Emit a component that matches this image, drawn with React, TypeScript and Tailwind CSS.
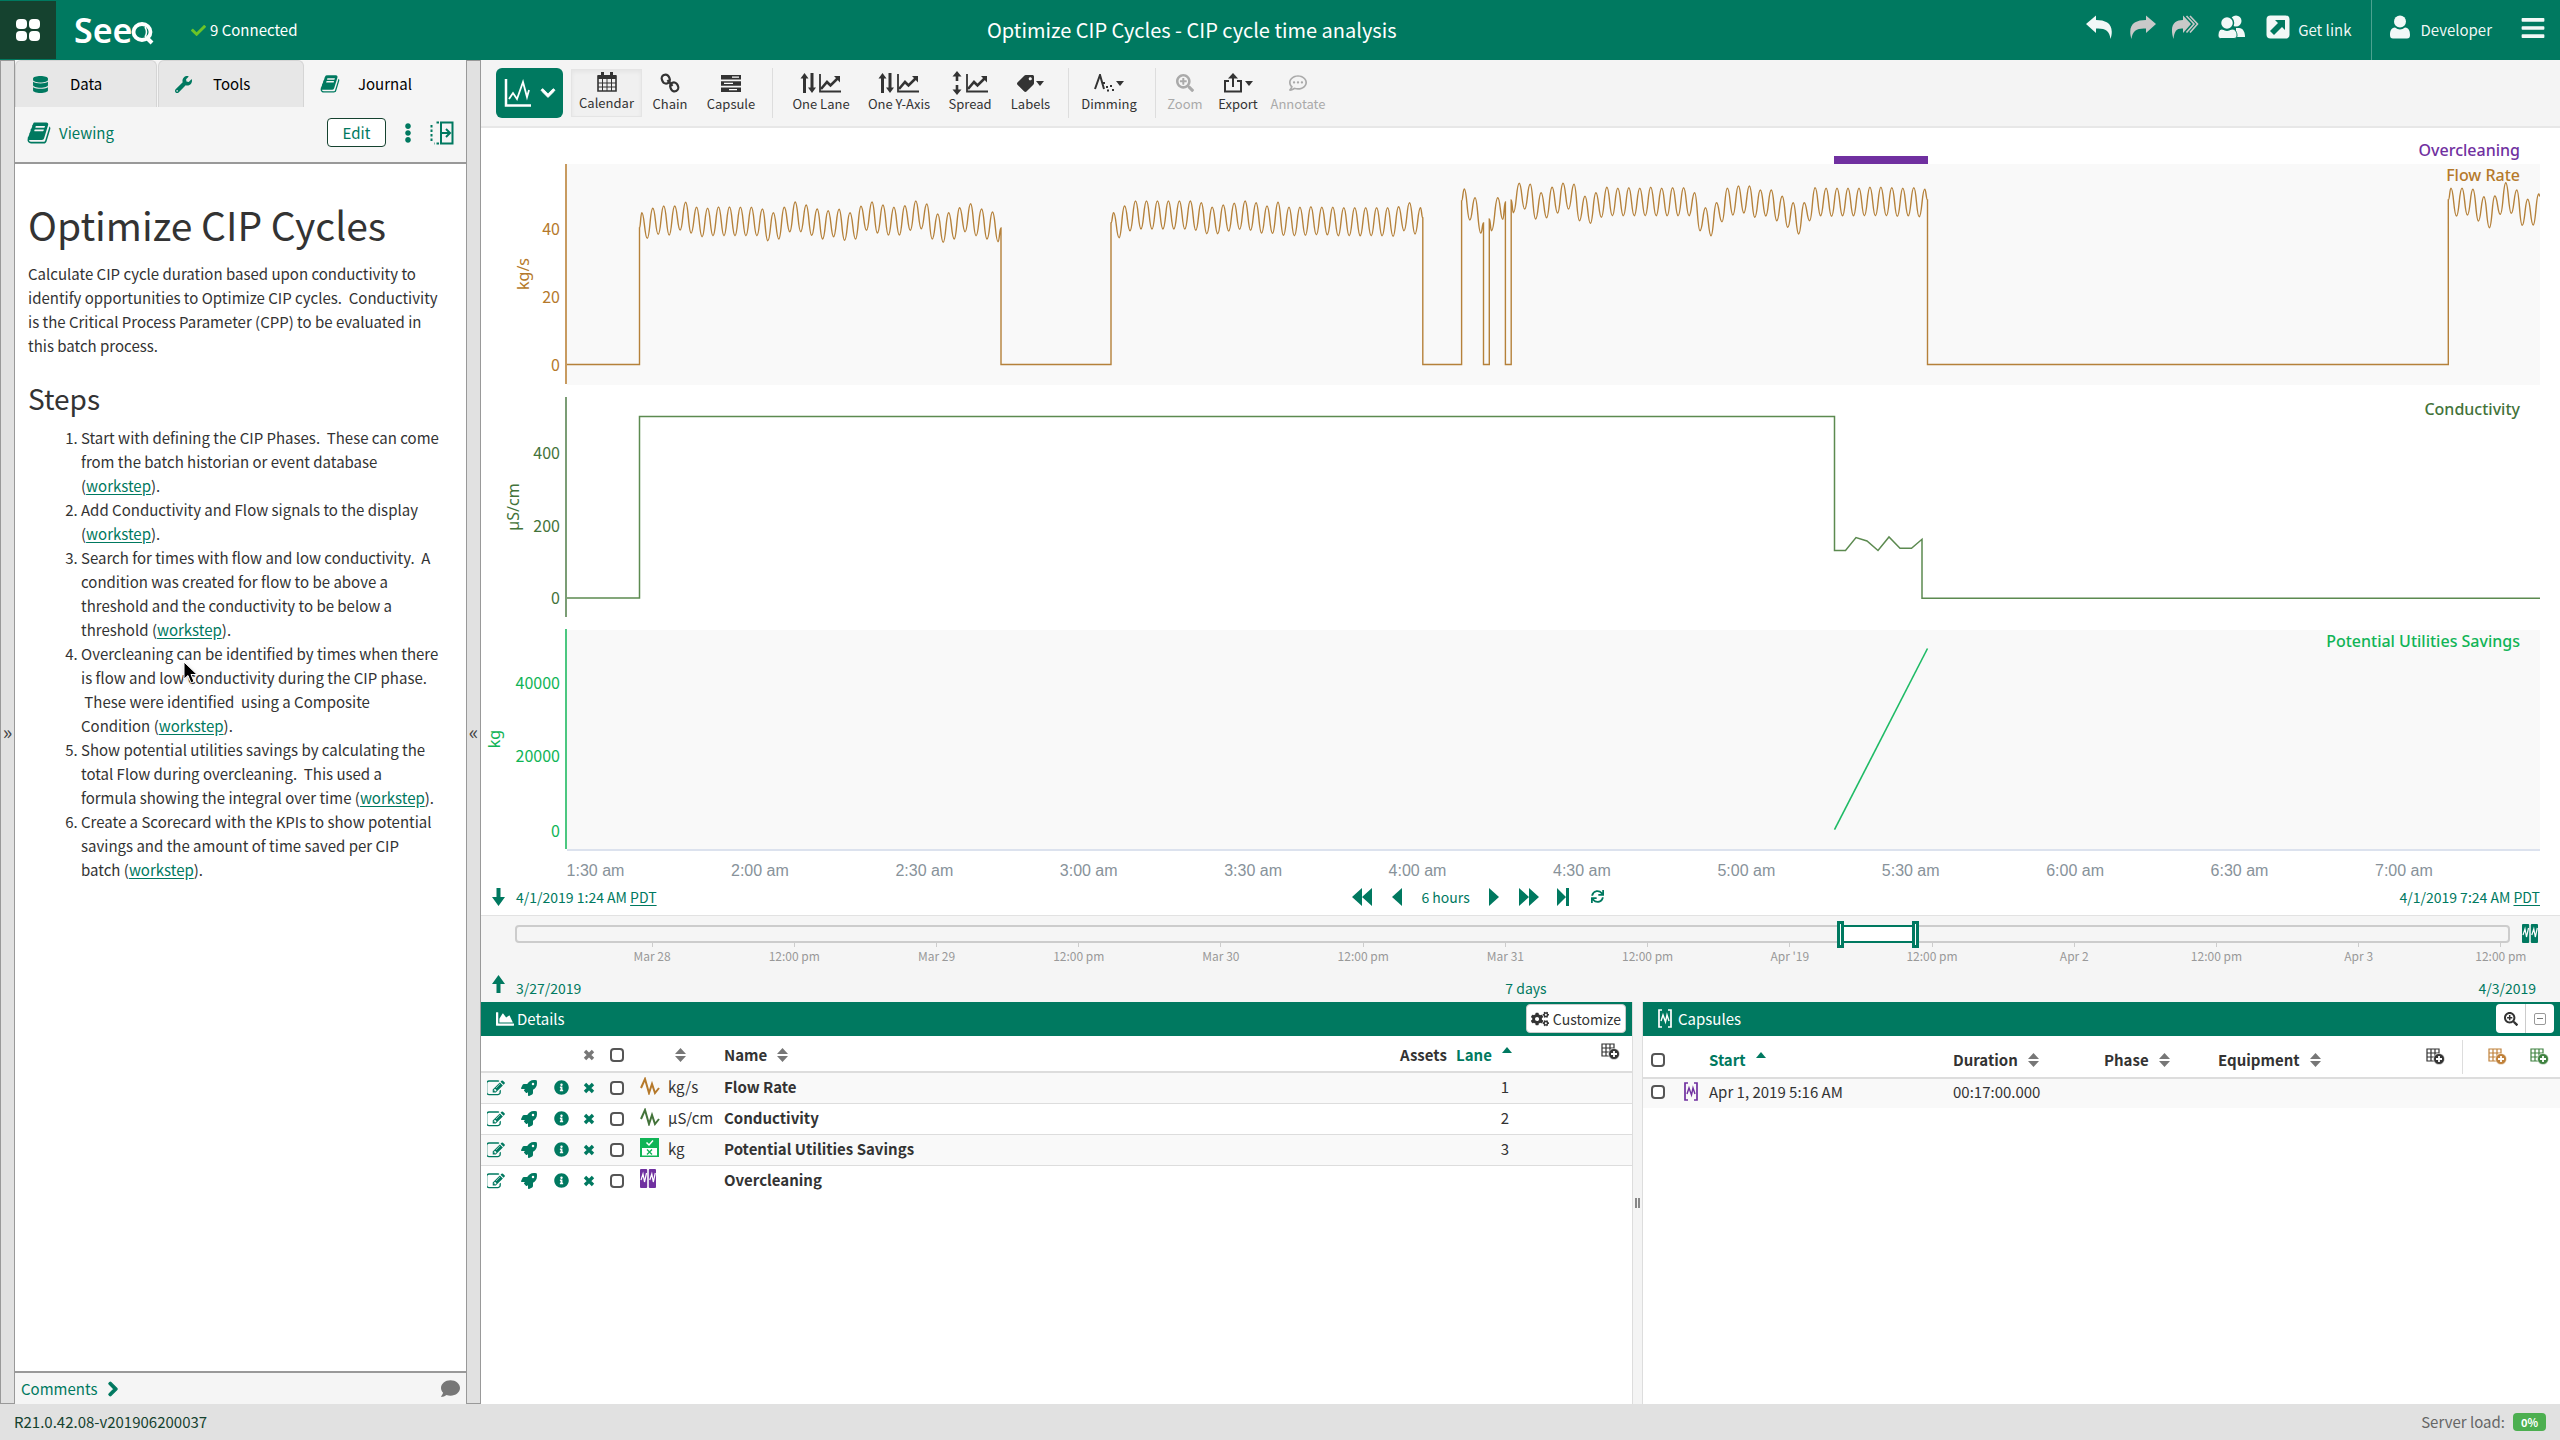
import type { ReactNode } from "react";
import {
  FaBars,
  FaChartArea,
  FaCheck,
  FaChevronDown,
  FaChevronRight,
  FaCogs,
  FaComment,
  FaDatabase,
  FaEllipsisV,
  FaInfoCircle,
  FaRegCommentDots,
  FaRocket,
  FaSearchPlus,
  FaSync,
  FaTag,
  FaTimes,
  FaUser,
  FaWrench,
} from "react-icons/fa";

/* ---------- flow rate series ---------- */

type Pt = [number, number];
const STEP = 10.96;
const ZERO = 364.5;

/** Interleaves crests and troughs spaced one period apart. */
function wave(x0: number, crests: number[], troughs: number[]): Pt[] {
  const out: Pt[] = [];
  crests.forEach((c, i) => {
    out.push([x0 + i * STEP, c]);
    if (i < troughs.length) out.push([x0 + (i + 0.5) * STEP, troughs[i]]);
  });
  return out;
}

const third = (base: number, v: number[]) => v.map((n) => n / 3 + base);

const runs: Pt[][] = [
  [
    [639.5, 228],
    ...wave(
      641.8,
      third(50, [488, 475, 468, 468, 457, 472, 475, 471, 471, 472, 472, 477, 488, 472, 456, 465, 477, 482, 478, 488, 469, 456, 465, 472, 467, 453, 462, 492, 488, 473, 461, 477, 486]),
      third(50, [565, 553, 555, 540, 549, 560, 557, 557, 557, 557, 557, 572, 567, 545, 545, 556, 567, 560, 571, 567, 541, 549, 555, 555, 541, 536, 567, 577, 567, 545, 557, 567, 575]),
    ),
    [1001, 228],
  ],
  [
    [1111, 223],
    ...wave(
      1113.6,
      [...third(50, [488, 468, 453, 453, 453, 453, 453, 453, 458, 472, 465, 460, 453, 458, 468, 457, 472, 472]), ...third(130, [230, 232, 232, 233, 233, 233, 233, 233, 230, 218, 233])],
      [...third(50, [563, 542, 537, 537, 537, 537, 537, 541, 551, 551, 543, 538, 541, 549, 550, 556, 557, 556]), ...third(130, [314, 314, 317, 317, 317, 317, 317, 319, 302, 312])],
    ),
    [1422.8, 218],
  ],
  [
    [1461.6, 201],
    [1464.3, 189],
    [1469.8, 220],
    [1475, 197.7],
    [1480.8, 233],
    [1483.5, 223],
  ],
  [
    [1489.3, 219],
    [1491.5, 230.7],
    [1497.8, 197.7],
    [1502.7, 219.3],
    [1505.4, 202],
  ],
  [
    [1511.2, 200],
    [1513.4, 212.7],
    ...wave(
      1519.2,
      third(130, [160, 163, 188, 172, 160, 163, 199, 188, 172, 175, 173, 175, 172, 175, 173, 173, 188, 233, 218, 175, 168, 168, 180, 180, 199, 218, 218, 173, 175, 175, 175, 175, 172, 172, 173, 175, 173, 178]),
      third(130, [237, 267, 263, 249, 237, 272, 280, 262, 257, 257, 257, 257, 257, 257, 257, 257, 302, 317, 275, 255, 249, 262, 258, 272, 292, 312, 272, 257, 259, 257, 257, 257, 257, 257, 259, 257, 260]),
    ),
    [1927.5, 200],
  ],
  [
    [2448.3, 200],
    ...wave(2451, third(0, [565, 565, 568, 590, 588, 548, 570, 598, 582]), third(0, [648, 645, 663, 683, 643, 640, 676, 675])),
    [2540, 196],
  ],
];

function flowPath(): string {
  let d = `M567 ${ZERO}`;
  runs.forEach((run, r) => {
    d += `H${run[0][0].toFixed(1)}V${run[0][1]}`;
    for (let i = 1; i < run.length; i++) {
      const [px, py] = run[i - 1];
      const [x, y] = run[i];
      const m = ((px + x) / 2).toFixed(1);
      d += `C${m} ${py.toFixed(1)} ${m} ${y.toFixed(1)} ${x.toFixed(1)} ${y.toFixed(1)}`;
    }
    if (r < runs.length - 1) d += `V${ZERO}`;
  });
  return d;
}

const hours = ["1:30 am", "2:00 am", "2:30 am", "3:00 am", "3:30 am", "4:00 am", "4:30 am", "5:00 am", "5:30 am", "6:00 am", "6:30 am", "7:00 am"];

function Tick({ y, children }: { y: number; children: ReactNode }) {
  return (
    <text x="560" y={y} textAnchor="end">
      {children}
    </text>
  );
}

function TrendChart() {
  return (
    <svg viewBox="481 128 2079 756" className="block w-full shrink-0 text-base" role="img" aria-label="Trend of flow rate, conductivity and potential utilities savings">
      <rect x="567" y="164" width="1973" height="221" fill="#f9f9f9" />
      <rect x="567" y="630" width="1973" height="219" fill="#f9f9f9" />
      <rect x="567" y="849" width="1973" height="2" fill="#dce2ee" />
      <rect x="1834" y="156" width="94" height="8" fill="#7030a0" />

      <g fill="#b5792b">
        <rect x="565" y="164" width="2" height="220" opacity="0.75" />
        <Tick y={235}>40</Tick>
        <Tick y={303}>20</Tick>
        <Tick y={371}>0</Tick>
        <text transform="translate(529 274) rotate(-90)" textAnchor="middle" className="font-['Noto_Sans']">kg/s</text>
      </g>
      <g fill="#43733a">
        <rect x="565" y="397" width="2" height="220" opacity="0.7" />
        <Tick y={459}>400</Tick>
        <Tick y={532}>200</Tick>
        <Tick y={604}>0</Tick>
        <text transform="translate(519 507) rotate(-90)" textAnchor="middle" className="font-['Noto_Sans']">µS/cm</text>
      </g>
      <g fill="#10b456">
        <rect x="565" y="629" width="2" height="220" opacity="0.75" />
        <Tick y={689}>40000</Tick>
        <Tick y={762}>20000</Tick>
        <Tick y={837}>0</Tick>
        <text transform="translate(500 739) rotate(-90)" textAnchor="middle" className="font-['Noto_Sans']">kg</text>
      </g>

      <path d={flowPath()} fill="none" stroke="#b5813a" strokeWidth="1.4" />
      <path
        d="M567 598H639.5V416.5H1834.5V550.5H1845.5L1856 537.5L1867 541L1878 550.5L1889 537L1900 548.3H1911.5L1922 539.3V598.3H2540"
        fill="none"
        stroke="#5c8a50"
        strokeWidth="1.5"
      />
      <path d="M1834.5 829.7L1927.5 648.5" fill="none" stroke="#1fbb66" strokeWidth="1.6" />

      <g className="font-['Noto_Sans'] font-medium" textAnchor="end">
        <text x="2520" y="156" fill="#7030a0">Overcleaning</text>
        <text x="2520" y="181" fill="#b5792b">Flow Rate</text>
        <text x="2520" y="415" fill="#43733a">Conductivity</text>
        <text x="2520" y="647" fill="#10b456">Potential Utilities Savings</text>
      </g>
      <g className="font-['Liberation_Sans']" textAnchor="middle" fill="#87929a">
        {hours.map((h, i) => (
          <text key={h} x={595.5 + i * 164.4} y="876">
            {h}
          </text>
        ))}
      </g>
    </svg>
  );
}

/* ---------- icons ---------- */

const BOOK =
  "M1639 478q40 57 18 129l-275 906q-19 64-76.5 107.5t-122.5 43.5h-923q-77 0-148.5-53.5t-99.5-131.5q-24-67-2-127 0-4 3-27t4-37q1-8-3-21.5t-3-19.5q2-11 8-21t16.5-23.5 16.5-23.5q23-38 45-91.5t30-91.5q3-10 .5-30t-.5-28q3-11 17-28t17-23q21-36 42-92t25-90q1-9-2.5-32t.5-28q4-13 22-30.5t22-22.5q19-26 42.5-84.5t27.5-96.5q1-8-3-25.5t-2-26.5q2-8 9-18t18-23 17-21q8-12 16.5-30.5t15-35 16-36 19.5-32 26.5-23.5 36-11.5 47.5 5.5l-1 3q38-9 51-9h761q74 0 114 56t18 130l-274 906q-36 119-71.5 153.5t-128.5 34.5h-869q-27 0-38 15-11 16-1 43 24 70 144 70h923q29 0 56-15.5t35-41.5l300-987q7-22 5-57 38 15 59 43zm-1064 2q-4 13 2 22.5t20 9.5h608q13 0 25.5-9.5t16.5-22.5l21-64q4-13-2-22.5t-20-9.5h-608q-13 0-25.5 9.5t-16.5 22.5zm-83 256q-4 13 2 22.5t20 9.5h608q13 0 25.5-9.5t16.5-22.5l21-64q4-13-2-22.5t-20-9.5h-608q-13 0-25.5 9.5t-16.5 22.5z";
const EDIT =
  "M888 1184l116-116-152-152-116 116v56h96v96h56zm440-720q-16-16-33 1l-350 350q-17 17-1 33t33-1l350-350q17-17 1-33zm80 594v190q0 119-84.5 203.5t-203.5 84.5h-832q-119 0-203.5-84.5t-84.5-203.5v-832q0-119 84.5-203.5t203.5-84.5h832q63 0 117 25 15 7 18 23 3 17-9 29l-49 49q-14 14-32 8-23-6-45-6h-832q-66 0-113 47t-47 113v832q0 66 47 113t113 47h832q66 0 113-47t47-113v-126q0-13 9-22l64-64q15-15 35-7t20 29zm-96-738l288 288-672 672h-288v-288zm444 132l-92 92-288-288 92-92q28-28 68-28t68 28l152 152q28 28 28 68t-28 68z";

function Icon({ box, className, children }: { box: string; className: string; children: ReactNode }) {
  return (
    <svg viewBox={box} className={`${className} shrink-0`} fill="currentColor" aria-hidden="true">
      {children}
    </svg>
  );
}

const BookIcon = ({ className }: { className: string }) => (
  <Icon box="0 100 1670 1600" className={className}>
    <path d={BOOK} />
  </Icon>
);

const UndoIcon = () => (
  <Icon box="0 0 27 24" className="h-6 w-[27px]">
    <path d="M0 9L10 0.500V5C21 5 29 9.500 24.500 24C23.500 15.500 19 13 10 13.500V18Z" />
  </Icon>
);
const RedoIcon = () => (
  <Icon box="0 0 27 24" className="h-6 w-[27px]">
    <path d="M27 9L17 0.500V5C6 5-2 9.500 2.500 24C3.500 15.500 8 13 17 13.500V18Z" />
  </Icon>
);
const RedoAllIcon = () => (
  <Icon box="0 0 28 24" className="h-6 w-7">
    <path d="M20 9L12 0.500V5C4 5-2 9.500 2.500 24C3.500 15.500 6 13 12 13.500V18Z" />
    <path d="M15.500 1L23 9L15.500 17.500M19 1L26.500 9L19 17.500" fill="none" stroke="currentColor" strokeWidth="1.600" />
  </Icon>
);
const UsersIcon = () => (
  <Icon box="0 0 27 24" className="h-6 w-[27px]">
    <circle cx="18" cy="6" r="5.500" />
    <path d="M18 13h3c4 0 6 4 6 9h-9z" />
    <circle cx="9" cy="8" r="6.500" stroke="#007960" strokeWidth="1.500" />
    <path d="M4 14q5 3 10 0c4 0 5 4 5 7q0 2.500-3 2.500H2.500Q0 23.500 0 21c0-3 1-7 4-7z" stroke="#007960" />
  </Icon>
);
const PersonIcon = () => (
  <Icon box="0 0 20 24" className="h-6 w-5">
    <circle cx="10" cy="6.500" r="6" />
    <path d="M5 12.500q5 4 10 0c4 0 5 4 5 7.500q0 3.500-3 3.500H3Q0 23.500 0 20c0-3.500 1-7.500 5-7.500z" />
  </Icon>
);
const ShareIcon = () => (
  <Icon box="0 0 24 24" className="size-6">
    <rect x="0.500" y="0.500" width="23" height="23" rx="4" />
    <path d="M9 5h10v10l-3-3-8 8-4-4 8-8z" fill="#007960" />
  </Icon>
);

const TrendIcon = () => (
  <Icon box="0 0 28 28" className="size-7">
    <path d="M2 0V26.500H27" fill="none" stroke="currentColor" strokeWidth="2.500" />
    <path d="M5 20l4-6 4 6 6-17 4 15 2-7" fill="none" stroke="currentColor" strokeWidth="1.800" />
  </Icon>
);
const CalendarIcon = () => (
  <Icon box="0 0 20 20" className="size-5">
    <path d="M1 4h18v15H1z" fill="none" stroke="currentColor" strokeWidth="1.600" />
    <path d="M1 3h18v4H1zM4 0h3v5H4zM13 0h3v5h-3z" />
    <path d="M1 11h18M1 15h18M5.500 7v12M10 7v12M14.500 7v12" stroke="currentColor" strokeWidth="1" />
  </Icon>
);
const ChainIcon = () => (
  <Icon box="0 0 20 20" className="size-5">
    <g fill="none" stroke="currentColor" strokeWidth="2.200">
      <rect x="2" y="1.500" width="7.500" height="9" rx="3.700" transform="rotate(-25 6 6)" />
      <rect x="10.500" y="9.500" width="7.500" height="9" rx="3.700" transform="rotate(-25 14 14)" />
      <path d="M7.500 7L12.500 13" />
    </g>
  </Icon>
);
const StackIcon = () => (
  <Icon box="0 0 20 17" className="h-[17px] w-5">
    <path d="M0 0h20v4.500H0zM0 6.200h20v4.500H0zM0 12.400h20v4.500H0z" />
    <path d="M11 2.200h7M3 8.400h9M8 14.600h8" stroke="#fff" strokeWidth="1.300" />
  </Icon>
);
const Graph = () => (
  <>
    <path d="M20 1V18.500H41" fill="none" stroke="currentColor" strokeWidth="1.800" />
    <path d="M21 16l6-7 3.500 3.500L38 5" fill="none" stroke="currentColor" strokeWidth="2.600" />
    <path d="M34 3h6v6.500z" />
  </>
);
const LaneIcon = () => (
  <Icon box="0 0 42 20" className="h-5 w-[42px]">
    <path d="M4.500 0L8.500 5.500H6V20H3V5.500H0.500zM12 20L16 14.500H13.500V0H10.500V14.500H8z" />
    <Graph />
  </Icon>
);
const SpreadIcon = () => (
  <Icon box="4 -2 38 24" className="h-6 w-[38px]">
    <path d="M10 -2L14.500 3.500H11.300V8H8.700V3.500H5.500zM10 22L14.500 16.500H11.300V12H8.700V16.500H5.500z" />
    <Graph />
  </Icon>
);
const Caret = () => (
  <Icon box="0 0 8 5" className="h-[5px] w-2">
    <path d="M0 0h8L4 5z" />
  </Icon>
);
const DimIcon = () => (
  <Icon box="0 0 20 18" className="h-[18px] w-5">
    <path d="M1 15L6 1l4 14" fill="none" stroke="currentColor" strokeWidth="2" />
    <path d="M9 8h2v2H9zM12 12h2v2h-2zM13 15.500h2v2h-2zM16 11h2v2h-2zM18 15h2v2h-2z" />
  </Icon>
);
const ExportIcon = () => (
  <Icon box="0 0 20 20" className="size-5">
    <path d="M6 8H2v10.500h16V8h-4M10 3v11" fill="none" stroke="currentColor" strokeWidth="2" />
    <path d="M10 0l5 5.500H5z" />
  </Icon>
);
const CrossIcon = () => (
  <Icon box="0 0 12 12" className="mx-auto size-3">
    <path d="M2 2l8 8M10 2l-8 8" fill="none" stroke="currentColor" strokeWidth="3.400" />
  </Icon>
);

const SignalIcon = () => (
  <Icon box="0 0 20 18" className="h-[18px] w-5">
    <path d="M1 11L5 2l4 14 3-9 3 9 4-5" fill="none" stroke="currentColor" strokeWidth="2" />
  </Icon>
);
const FormulaIcon = () => (
  <Icon box="0 0 19 19" className="size-[19px]">
    <rect width="19" height="19" />
    <rect x="2" y="10" width="15" height="7.500" fill="#fff" />
    <path d="M6.500 4.500l2.500 2.500 4-4.500" fill="none" stroke="#fff" strokeWidth="1.500" />
    <path d="M7 11.500l5 5M12 11.500l-5 5" stroke="currentColor" strokeWidth="1.400" />
  </Icon>
);
const ConditionIcon = () => (
  <Icon box="0 0 16 19" className="h-[19px] w-4">
    <rect width="7.200" height="19" rx="1" />
    <rect x="8.800" width="7.200" height="19" rx="1" />
    <path d="M1 11l2-6 1.500 8L6.500 4M9.800 11l2-6 1.500 8 2-9" fill="none" stroke="#fff" strokeWidth="1.200" />
  </Icon>
);
const CapsuleIcon = () => (
  <Icon box="0 0 14 19" className="h-[19px] w-3.5">
    <path d="M4 1H1V18H4M10 1H13V18H10" fill="none" stroke="currentColor" strokeWidth="1.700" />
    <path d="M3 12l2-6 2.500 7L9 6l2 6" fill="none" stroke="currentColor" strokeWidth="1.400" />
  </Icon>
);
const AddColumnIcon = () => (
  <Icon box="0 0 19 17" className="h-[17px] w-[19px]">
    <path d="M1 1h12v12H1zM1 5h12M1 9h12M5 1v12M9 1v12" fill="none" stroke="currentColor" strokeWidth="1.200" />
    <circle cx="13" cy="11" r="5.500" stroke="#fff" strokeWidth="0.600" />
    <path d="M13 8v6M10 11h6" stroke="#fff" strokeWidth="1.800" />
  </Icon>
);
const SortIcon = () => (
  <Icon box="0 0 11 14" className="h-3.5 w-[11px] text-[#777]">
    <path d="M5.500 0L11 6H0zM5.500 14L11 8H0z" />
  </Icon>
);
const SortUp = () => (
  <Icon box="0 0 10 6" className="mb-2.5 h-1.5 w-2.5">
    <path d="M5 0l5 6H0z" />
  </Icon>
);

function Play({ shape, width, label }: { shape: string; width: number; label: string }) {
  return (
    <button aria-label={label}>
      <svg viewBox={`0 0 ${width} 18`} width={width} height="18" fill="currentColor" aria-hidden="true">
        <path d={shape} />
      </svg>
    </button>
  );
}

/* ---------- header ---------- */

function TopBar() {
  return (
    <header className="flex h-[60px] shrink-0 items-center bg-[#007960] text-white">
      <button className="my-px flex h-[58px] w-14 items-center justify-center self-start bg-[#15422f]" aria-label="Applications">
        <span className="grid grid-cols-2 gap-0.5">
          <span className="h-2.5 w-[11px] rounded-sm bg-white" />
          <span className="h-2.5 w-[11px] rounded-sm bg-white" />
          <span className="h-2.5 w-[11px] rounded-sm bg-white" />
          <span className="h-2.5 w-[11px] rounded-sm bg-white" />
        </span>
      </button>
      <a href="#home" className="ml-[18px] flex h-8 w-[82px] items-end" aria-label="Seeq">
        <span className="font-['Noto_Sans'] text-[34px] leading-8 font-semibold">See</span>
        <svg viewBox="0 0 25 24" className="h-6 w-[25px] shrink-0 overflow-visible" aria-hidden="true">
          <ellipse cx="10" cy="10" rx="8.500" ry="8" fill="none" stroke="#fff" strokeWidth="3.800" />
          <path d="M13 5q3 5 0 10" fill="none" stroke="#fff" strokeWidth="1.500" />
          <path d="M14 15l6 6" stroke="#fff" strokeWidth="4" />
        </svg>
      </a>
      <div className="ml-[35px] flex items-center gap-1">
        <FaCheck className="size-[15px] text-[#6cc427]" />
        <span>9 Connected</span>
      </div>
      <h1 className="flex-1 text-center text-xl leading-6">Optimize CIP Cycles - CIP cycle time analysis</h1>
      <nav className="flex h-full items-center text-white/95">
        <button aria-label="Undo" className="mb-1.5 w-[43px]"><UndoIcon /></button>
        <button aria-label="Redo" className="mb-1.5 w-[42px] text-[#c9c9c9]"><RedoIcon /></button>
        <button aria-label="Redo all" className="mb-1.5 w-[47px] text-[#c9c9c9]"><RedoAllIcon /></button>
        <button aria-label="Share" className="mb-1.5 w-12"><UsersIcon /></button>
        <button className="flex items-center gap-2 pr-5">
          <span className="mb-1.5"><ShareIcon /></span>Get link
        </button>
        <button className="flex h-full items-center gap-2.5 border-l border-white/30 px-[18px]">
          <span className="mb-1.5"><PersonIcon /></span>Developer
        </button>
        <button aria-label="Menu" className="mr-3.5 mb-1 ml-2.5"><FaBars className="size-[26px]" /></button>
      </nav>
    </header>
  );
}

/* ---------- journal ---------- */

function Gutter({ children }: { children: ReactNode }) {
  return (
    <button className="flex w-[15px] shrink-0 items-center justify-center border border-[#999] bg-[#e1e1e1] text-xl text-[#444]">
      {children}
    </button>
  );
}

const Workstep = () => (
  <>
    (
    <a href="#workstep" className="text-[#007960] underline underline-offset-2">
      workstep
    </a>
    ).
  </>
);

function Tab({ icon, label, className }: { icon: ReactNode; label: string; className: string }) {
  return (
    <button role="tab" className={`${className} flex items-center rounded-t-md pl-4 text-black`}>
      <span className="w-[38px] text-[#007960]">{icon}</span>
      {label}
    </button>
  );
}

function Journal() {
  return (
    <aside className="relative flex w-[451px] shrink-0 flex-col bg-white">
      <div role="tablist" className="flex h-[47px] shrink-0 bg-[#f5f5f5]">
        <Tab label="Data" className="w-[142px] border border-b-0 border-[#d5d5d5] bg-[#e7e7e7]" icon={<FaDatabase className="size-[17px]" />} />
        <Tab label="Tools" className="ml-px w-[146px] border border-b-0 border-[#d5d5d5] bg-[#e7e7e7]" icon={<FaWrench className="size-[17px]" />} />
        <Tab label="Journal" className="flex-1 bg-[#f5f5f5]" icon={<BookIcon className="h-[18px] w-5" />} />
      </div>
      <div className="flex h-[57px] shrink-0 items-center border-b-2 border-[#999] bg-[#f5f5f5] pr-3 pb-1 pl-3 text-[#007960]">
        <BookIcon className="h-[22px] w-6" />
        <span className="ml-2">Viewing</span>
        <button className="ml-auto h-[29px] w-[59px] rounded border border-[#15422f] bg-white">Edit</button>
        <button aria-label="More" className="ml-3"><FaEllipsisV className="size-5" /></button>
        <button aria-label="Dock journal" className="ml-3">
          <Icon box="0 0 24 24" className="size-6">
            <path d="M9 1.500H5M1.500 4v16M9 22.500H4" fill="none" stroke="currentColor" strokeWidth="2" strokeDasharray="2.500 2" />
            <path d="M11 1.500h11.500v21H11zM12 12h7M16 8l4 4-4 4" fill="none" stroke="currentColor" strokeWidth="2" />
          </Icon>
        </button>
      </div>
      <article className="flex-1 pr-[25px] pl-[13px] leading-6 text-[#333]">
        <h2 className="mt-9 text-[39px] leading-[48px]">Optimize CIP Cycles</h2>
        <p className="mt-3.5">
          Calculate CIP cycle duration based upon conductivity to identify opportunities to Optimize CIP cycles.&nbsp; Conductivity
          <br />
          is the Critical Process Parameter (CPP) to be evaluated in
          <br />
          this batch process.
        </p>
        <h3 className="mt-5 text-[28px] leading-10">Steps</h3>
        <ol className="mt-2 list-decimal pl-[53px]">
          <li>Start with defining the CIP Phases.&nbsp; These can come from the batch historian or event database <Workstep /></li>
          <li>Add Conductivity and Flow signals to the display <Workstep /></li>
          <li>Search for times with flow and low conductivity.&nbsp; A condition was created for flow to be above a threshold and the conductivity to be below a threshold <Workstep /></li>
          <li>
            Overcleaning can be identified by times when there
            <br />
            is flow and low conductivity during the CIP phase.
            <br />
            &nbsp;These were identified&nbsp; using a Composite
            <br />
            Condition <Workstep />
          </li>
          <li>
            Show potential utilities savings by calculating the total Flow during overcleaning.&nbsp; This used a
            <br />
            formula showing the integral over time <Workstep />
          </li>
          <li>
            Create a Scorecard with the KPIs to show potential savings and the amount of time saved per CIP
            <br />
            batch <Workstep />
          </li>
        </ol>
      </article>
      <svg viewBox="0 0 16 24" className="absolute top-[601px] left-[168px] h-6 w-4 drop-shadow" aria-hidden="true">
        <path d="M1 1V18L5 14.500L8 22L11 20.500L8 13.500H14Z" fill="#000" stroke="#fff" strokeWidth="1" />
      </svg>
      <div className="flex h-[33px] shrink-0 items-center border-t-2 border-[#999] bg-[#f5f5f5] px-1.5 text-[#007960]">
        <button className="flex items-center gap-2.5">
          Comments
          <FaChevronRight className="h-4 w-3" stroke="currentColor" strokeWidth="40" />
        </button>
        <FaComment className="ml-auto size-[19px] text-[#777]" />
      </div>
    </aside>
  );
}

/* ---------- toolbar ---------- */

function Tool({ label, icon, className = "", disabled = false }: { label: string; icon: ReactNode; className?: string; disabled?: boolean }) {
  return (
    <button disabled={disabled} className={`${className} flex h-12 shrink-0 flex-col items-center justify-end text-[13px] leading-[18px] text-[#333] disabled:text-[#aaa]`}>
      <span className="flex h-6 items-center gap-0.5">{icon}</span>
      <span className="mb-1">{label}</span>
    </button>
  );
}

const Divider = () => <span className="h-[50px] w-px shrink-0 bg-[#ddd]" />;

function Toolbar() {
  return (
    <div className="flex h-[68px] shrink-0 items-center border-b-2 border-[#e7e7e7] bg-[#f4f4f4] pl-[15px]">
      <button aria-label="Trend view" className="flex h-[50px] w-[67px] items-center justify-center gap-2 rounded-md bg-[#007960] text-white">
        <TrendIcon />
        <FaChevronDown className="size-4" stroke="currentColor" strokeWidth="30" />
      </button>
      <Tool label="Calendar" icon={<CalendarIcon />} className="ml-2 w-[71px] border border-[#e4e4e4] bg-[#f0f0f0] shadow-inner" />
      <Tool label="Chain" icon={<ChainIcon />} className="w-14" />
      <Tool label="Capsule" icon={<StackIcon />} className="mr-2 w-[66px]" />
      <Divider />
      <Tool label="One Lane" icon={<LaneIcon />} className="ml-2 w-20" />
      <Tool label="One Y-Axis" icon={<LaneIcon />} className="w-[76px]" />
      <Tool label="Spread" icon={<SpreadIcon />} className="w-[66px]" />
      <Tool label="Labels" icon={<><FaTag className="size-[17px] rotate-90" /><Caret /></>} className="mr-2.5 w-[55px]" />
      <Divider />
      <Tool label="Dimming" icon={<><DimIcon /><Caret /></>} className="w-20" />
      <span className="w-1.5" />
      <Divider />
      <Tool disabled label="Zoom" icon={<FaSearchPlus className="size-[18px]" />} className="ml-0.5 w-[54px]" />
      <Tool label="Export" icon={<><ExportIcon /><Caret /></>} className="w-[52px]" />
      <Tool disabled label="Annotate" icon={<FaRegCommentDots className="size-[18px]" />} className="w-[68px]" />
    </div>
  );
}

/* ---------- time range ---------- */

const days = ["Mar 28", "12:00 pm", "Mar 29", "12:00 pm", "Mar 30", "12:00 pm", "Mar 31", "12:00 pm", "Apr '19", "12:00 pm", "Apr 2", "12:00 pm", "Apr 3", "12:00 pm"];

const ArrowIcon = ({ className }: { className: string }) => (
  <Icon box="0 0 13 18" className={`${className} h-[18px] w-[13px]`}>
    <path d="M4.500 0h4v9H13l-6.500 9L0 9h4.500z" />
  </Icon>
);

function TimeRange() {
  return (
    <>
      <div className="flex h-[31px] shrink-0 items-center bg-white pb-1.5 text-sm text-[#007960]">
        <div className="flex w-[41.9%] items-center pl-[11px]">
          <ArrowIcon className="" />
          <span className="ml-[11px]">
            4/1/2019 1:24 AM <a href="#timezone" className="underline underline-offset-2">PDT</a>
          </span>
        </div>
        <Play label="Back one range" width={20} shape="M10 0V18L0 9zM20 0V18L10 9z" />
        <span className="w-5" />
        <Play label="Back half a range" width={10} shape="M10 0V18L0 9z" />
        <button className="w-[87px] text-center">6 hours</button>
        <Play label="Forward half a range" width={10} shape="M0 0V18L10 9z" />
        <span className="w-5" />
        <Play label="Forward one range" width={20} shape="M0 0V18L10 9zM10 0V18L20 9z" />
        <span className="w-[18px]" />
        <Play label="Jump to end" width={12} shape="M0 0V18L9 9zM9 0h3V18H9z" />
        <button aria-label="Refresh" className="ml-[22px]"><FaSync className="size-[13px]" /></button>
        <span className="ml-auto pr-5">
          4/1/2019 7:24 AM <a href="#timezone" className="underline underline-offset-2">PDT</a>
        </span>
      </div>
      <div className="shrink-0 overflow-hidden border-t border-[#e2e2e2] bg-[#f5f5f5]">
        <div className="flex h-[27px] items-end pr-[22px] pl-[34px]">
          <div className="relative mr-3 h-[18px] flex-1 rounded border-2 border-[#ccc]">
            <div className="absolute -top-0.5 left-[66.3%] flex h-[18px] w-[82px] items-center justify-between border-y-2 border-[#007960] bg-white">
              <button aria-label="Range start" className="h-[27px] w-[7px] shrink-0 border-3 border-[#007960] bg-white" />
              <button aria-label="Range end" className="h-[27px] w-[7px] shrink-0 border-3 border-[#007960] bg-white" />
            </div>
          </div>
          <button aria-label="Show capsules" className="text-[#007960]"><ConditionIcon /></button>
        </div>
        <div className="-mr-3 ml-[100px] grid grid-cols-14 text-center text-xs leading-[18px] text-[#999]">
          {days.map((d, i) => (
            <div key={i} className="flex flex-col items-center">
              <span className="h-1 w-px bg-[#ccc]" />
              {d}
            </div>
          ))}
        </div>
        <div className="flex h-[37px] items-center pt-2 pr-6 pl-[11px] text-sm text-[#007960]">
          <ArrowIcon className="mb-2 rotate-180" />
          <span className="ml-[11px] flex-1">3/27/2019</span>
          <button>7 days</button>
          <span className="flex-1 text-right">4/3/2019</span>
        </div>
      </div>
    </>
  );
}

/* ---------- tables ---------- */

const Check = ({ label }: { label: string }) => (
  <input type="checkbox" aria-label={label} className="block size-3.5 appearance-none rounded border-2 border-[#555] bg-white" />
);

const rows = [
  { name: "Flow Rate", unit: "kg/s", lane: "1", color: "text-[#b5792b]", icon: <SignalIcon /> },
  { name: "Conductivity", unit: "µS/cm", lane: "2", color: "text-[#43733a]", icon: <SignalIcon /> },
  { name: "Potential Utilities Savings", unit: "kg", lane: "3", color: "text-[#10b456]", icon: <FormulaIcon /> },
  { name: "Overcleaning", unit: "", lane: "", color: "text-[#7030a0]", icon: <ConditionIcon /> },
];

function Details() {
  return (
    <section className="flex w-[1152px] shrink flex-col border-r border-[#ddd] bg-white">
      <div className="flex h-[34px] items-center bg-[#007960] pr-1.5 pb-px pl-3.5 text-white">
        <FaChartArea className="h-[18px] w-5" />
        <h2 className="ml-0.5">Details</h2>
        <button className="ml-auto flex h-[29px] items-center gap-1 rounded border border-[#ccc] bg-white px-1 text-sm text-[#333]">
          <FaCogs className="h-4 w-[18px]" />
          Customize
        </button>
      </div>
      <table className="w-full table-fixed border-collapse leading-6 text-[#333]">
        <colgroup>
          <col className="w-[30px]" />
          <col className="w-[35px]" />
          <col className="w-[31px]" />
          <col className="w-[23px]" />
          <col className="w-[33px]" />
          <col className="w-[32px]" />
          <col className="w-[56px]" />
          <col />
          <col className="w-[60px]" />
          <col className="w-[110px]" />
          <col className="w-[72px]" />
        </colgroup>
        <thead>
          <tr className="h-9 border-b-2 border-[#ddd] text-left">
            <th /><th /><th />
            <th className="pt-0.5 text-[#777]"><CrossIcon /></th>
            <th className="pt-0.5 pl-2.5"><Check label="Select all items" /></th>
            <th />
            <th className="pt-0.5 pl-2.5"><SortIcon /></th>
            <th className="pt-0.5 pl-[3px]"><span className="flex items-center gap-2.5">Name <SortIcon /></span></th>
            <th className="pt-0.5 pl-2.5">Assets</th>
            <th className="pt-0.5 pl-1.5"><span className="flex items-center gap-2.5 text-[#007960]">Lane <SortUp /></span></th>
            <th className="pb-1 pl-[41px]"><AddColumnIcon /></th>
          </tr>
        </thead>
        <tbody>
          {rows.map((r) => (
            <tr key={r.name} className="h-[31px] border-b border-[#ddd] text-[#007960] last:border-0 odd:bg-[#f9f9f9]">
              <td><button aria-label="Edit" className="mx-auto block"><Icon box="100 100 1700 1500" className="h-4 w-[18px]"><path d={EDIT} /></Icon></button></td>
              <td><button aria-label="Launch" className="mx-auto block"><FaRocket className="size-4" /></button></td>
              <td><button aria-label="Info" className="mx-auto block"><FaInfoCircle className="size-[15px]" /></button></td>
              <td><button aria-label="Remove" className="mx-auto block"><CrossIcon /></button></td>
              <td className="pl-2.5"><Check label={`Select ${r.name}`} /></td>
              <td className={`${r.color} pb-1 pl-[7px]`}>{r.icon}</td>
              <td className="pb-0.5 pl-[3px] text-[#333]">{r.unit}</td>
              <td className="pb-0.5 pl-[3px] font-bold text-[#333]">{r.name}</td>
              <td />
              <td className="pb-0.5 text-center text-[#333]">{r.lane}</td>
              <td />
            </tr>
          ))}
        </tbody>
      </table>
    </section>
  );
}

function Capsules() {
  return (
    <section className="flex flex-1 flex-col border-l border-[#ddd] bg-white">
      <div className="flex h-[34px] items-center bg-[#007960] pr-1.5 pb-px pl-[15px] text-white">
        <CapsuleIcon />
        <h2 className="ml-1.5">Capsules</h2>
        <div className="ml-auto flex h-[29px] divide-x divide-[#ccc] rounded bg-white text-[#333]">
          <button aria-label="Zoom to capsule" className="flex w-[30px] items-center justify-center"><FaSearchPlus className="size-3.5" /></button>
          <button aria-label="Collapse" className="flex w-7 items-center justify-center">
            <span className="flex size-3 items-center justify-center rounded-xs border border-[#999]"><span className="h-px w-1.5 bg-[#777]" /></span>
          </button>
        </div>
      </div>
      <table className="w-full table-fixed border-collapse leading-6 text-[#333]">
        <colgroup>
          <col className="w-[31px]" />
          <col className="w-[35px]" />
          <col className="w-[244px]" />
          <col className="w-[151px]" />
          <col className="w-[114px]" />
          <col />
          <col className="w-[150px]" />
        </colgroup>
        <thead>
          <tr className="h-[42px] border-b-2 border-[#ddd] text-left">
            <th className="pt-1.5 pl-2"><Check label="Select all capsules" /></th>
            <th />
            <th className="pt-1.5"><span className="flex items-center gap-2.5 text-[#007960]">Start <SortUp /></span></th>
            <th className="pt-1.5"><span className="flex items-center gap-2.5">Duration <SortIcon /></span></th>
            <th className="pt-1.5"><span className="flex items-center gap-2.5">Phase <SortIcon /></span></th>
            <th className="pt-1.5"><span className="flex items-center gap-2.5">Equipment <SortIcon /></span></th>
            <th>
              <span className="flex items-center pl-4">
                <AddColumnIcon />
                <span className="mx-[17px] h-[34px] w-px bg-[#ddd]" />
                <span className="ml-2 text-[#c0813a]"><AddColumnIcon /></span>
                <span className="ml-[23px] text-[#3f8240]"><AddColumnIcon /></span>
              </span>
            </th>
          </tr>
        </thead>
        <tbody>
          <tr className="h-[30px] bg-[#f9f9f9]">
            <td className="pb-1 pl-2"><Check label="Select capsule" /></td>
            <td className="pb-1 pl-2.5 text-[#7030a0]"><CapsuleIcon /></td>
            <td className="pb-1">Apr 1, 2019 5:16 AM</td>
            <td className="pb-1">00:17:00.000</td>
            <td />
            <td />
            <td />
          </tr>
        </tbody>
      </table>
    </section>
  );
}

export default function App() {
  return (
    <div className="flex h-screen flex-col overflow-hidden bg-white font-['Noto_Sans_CJK_SC',sans-serif] text-[15px] leading-6">
      <TopBar />
      <div className="flex min-h-0 flex-1">
        <Gutter>»</Gutter>
        <Journal />
        <Gutter>«</Gutter>
        <main className="flex min-w-0 flex-1 flex-col">
          <Toolbar />
          <TrendChart />
          <TimeRange />
          <div className="flex min-h-0 flex-1">
            <Details />
            <div className="flex flex-none items-center justify-center bg-[#f4f4f4] px-0.5">
              <span className="h-2.5 w-[5px] border-x-2 border-[#888]" />
            </div>
            <Capsules />
          </div>
        </main>
      </div>
      <footer className="flex h-9 shrink-0 items-center bg-[#e1e1e1] pr-3.5 pl-3.5 text-[#15422f]">
        <span>R21.0.42.08-v201906200037</span>
        <span className="ml-auto text-[#666]">Server load:</span>
        <span className="ml-2 rounded bg-[#4caf50] px-2 text-[11px] leading-[18px] font-bold text-white">0%</span>
      </footer>
    </div>
  );
}
